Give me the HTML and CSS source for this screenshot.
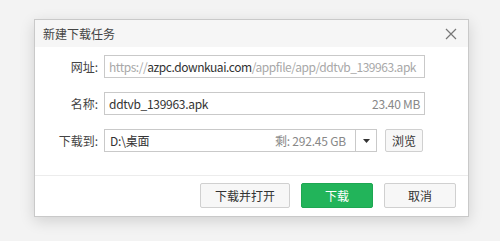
FILE: index.html
```html
<!DOCTYPE html>
<html>
<head>
<meta charset="utf-8">
<link rel="stylesheet" href="styles.css">
</head>
<body>
<div class="dialog">
  <div class="titlebar">
    <span class="title">新建下载任务</span>
    <svg class="close" width="12" height="12" viewBox="0 0 12 12"><path d="M1 1L11 11M11 1L1 11" stroke="#777" stroke-width="1.2" fill="none"/></svg>
  </div>
  <div class="form">
    <div class="row">
      <label class="label">网址:</label>
      <div class="field url"><span class="dim">https://</span><span class="host">azpc.downkuai.com</span><span class="dim">/appfile/app/ddtvb_139963.apk</span></div>
    </div>
    <div class="row">
      <label class="label">名称:</label>
      <div class="field name"><span class="val">ddtvb_139963.apk</span><span class="size">23.40 MB</span></div>
    </div>
    <div class="row">
      <label class="label">下载到:</label>
      <div class="pathbox">
        <div class="path"><span class="val">D:\桌面</span><span class="size">剩: 292.45 GB</span></div>
        <div class="drop"><svg width="7" height="4" viewBox="0 0 7 4"><path d="M0 0H7L3.5 4Z" fill="#333"/></svg></div>
      </div>
      <button class="btn small">浏览</button>
    </div>
  </div>
  <div class="footer">
    <button class="btn wide">下载并打开</button>
    <button class="btn primary">下载</button>
    <button class="btn">取消</button>
  </div>
</div>
</body>
</html>
```
FILE: styles.css
```css
* { box-sizing: border-box; }
body {
  margin: 0;
  width: 500px;
  height: 241px;
  background: #f3f3f3;
  padding: 19px 0 0 34px;
  font-family: "Noto Sans CJK SC", "Noto Sans", sans-serif;
  font-size: 12px;
  color: #333;
}
.dialog {
  width: 435px;
  height: 198px;
  background: #fff;
  border: 1px solid #c9c9c9;
  box-shadow: 0 4px 14px rgba(0,0,0,0.14);
  display: flex;
  flex-direction: column;
}
.titlebar {
  height: 27px;
  background: #f6f6f6;
  display: flex;
  align-items: center;
  justify-content: space-between;
  padding: 0 11px 0 8px;
}
.title { font-size: 12px; color: #444; }
.form {
  display: flex;
  flex-direction: column;
  gap: 14px;
  padding: 8px 0 0 0;
}
.row {
  display: flex;
  align-items: center;
  height: 23px;
}
.label {
  width: 69px;
  padding-right: 6px;
  text-align: right;
  color: #444;
}
.field {
  width: 321px;
  height: 23px;
  border: 1px solid #c9c9c9;
  display: flex;
  align-items: center;
  justify-content: space-between;
  padding: 0 4px 0 4px;
  white-space: nowrap;
  overflow: hidden;
  letter-spacing: -0.3px;
}
.url { justify-content: flex-start; letter-spacing: -0.45px; }
.dim { color: #a8a8a8; }
.host { color: #333; }
.size { color: #888; }
.val { color: #333; }
.pathbox {
  width: 273px;
  height: 23px;
  border: 1px solid #c9c9c9;
  display: flex;
}
.path {
  flex: 1;
  display: flex;
  align-items: center;
  justify-content: space-between;
  padding: 0 9px 0 5px;
  letter-spacing: -0.2px;
}
.drop {
  width: 21px;
  border-left: 1px solid #c9c9c9;
  display: flex;
  align-items: center;
  justify-content: center;
}
.btn {
  font-family: inherit;
  font-size: 12px;
  color: #333;
  background: #f7f7f7;
  border: 1px solid #d0d0d0;
  border-radius: 2px;
  height: 25px;
  width: 72px;
  padding: 0;
}
.btn.small { width: 38px; height: 23px; margin-left: 8px; }
.btn.wide { width: 90px; }
.btn.primary {
  background: #22b45a;
  border-color: #1ea752;
  color: #fff;
}
.footer {
  margin-top: auto;
  border-top: 1px solid #ececec;
  display: flex;
  justify-content: flex-end;
  gap: 11px;
  padding: 7px 12px 8px 0;
}
```
